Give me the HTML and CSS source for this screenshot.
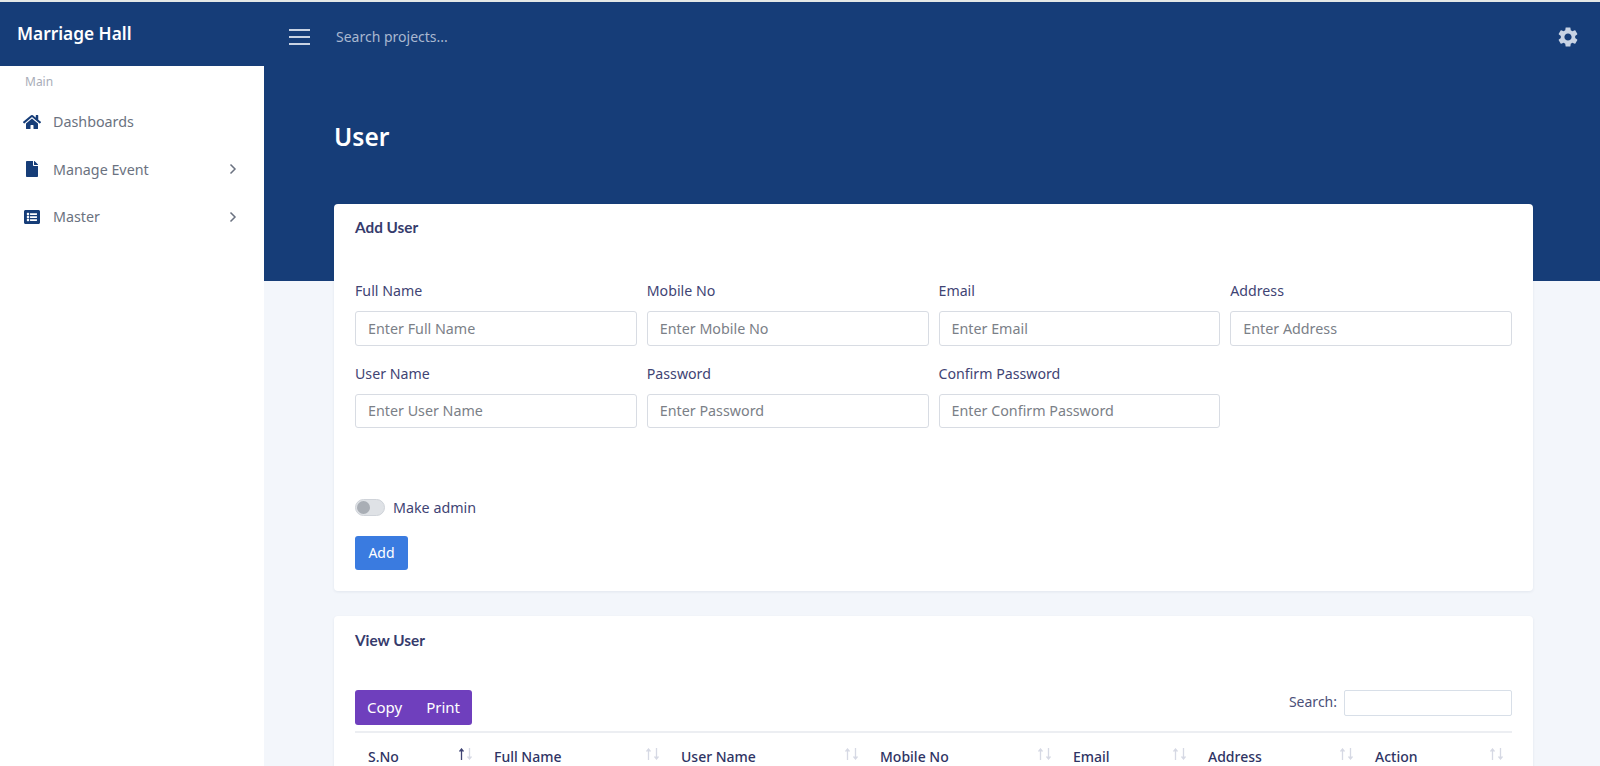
FILE: index.html
```html
<!DOCTYPE html>
<html lang="en">
<head>
<meta charset="utf-8">
<title>User - Marriage Hall</title>
<link rel="stylesheet" href="styles.css">
</head>
<body>
<div class="app">
  <aside class="sidebar">
    <div class="brand">Marriage Hall</div>
    <div class="nav-label">Main</div>
    <nav class="nav">
      <a class="nav-item"><svg class="nav-icon" viewBox="0 0 576 512"><path d="M280.37 148.26L96 300.11V464a16 16 0 0 0 16 16l112.06-.29a16 16 0 0 0 15.92-16V368a16 16 0 0 1 16-16h64a16 16 0 0 1 16 16v95.64a16 16 0 0 0 16 16.05L464 480a16 16 0 0 0 16-16V300L295.67 148.26a12.19 12.19 0 0 0-15.3 0zM571.6 251.47L488 182.56V44.05a12 12 0 0 0-12-12h-56a12 12 0 0 0-12 12v72.61L318.47 43a48 48 0 0 0-61 0L4.34 251.47a12 12 0 0 0-1.6 16.9l25.5 31A12 12 0 0 0 45.15 301l235.22-193.74a12.19 12.19 0 0 1 15.3 0L530.9 301a12 12 0 0 0 16.9-1.6l25.5-31a12 12 0 0 0-1.7-16.93z"/></svg><span class="nav-text">Dashboards</span></a>
      <a class="nav-item"><svg class="nav-icon" viewBox="0 0 384 512"><path d="M224 136V0H24C10.7 0 0 10.7 0 24v464c0 13.3 10.7 24 24 24h336c13.3 0 24-10.7 24-24V160H248c-13.2 0-24-10.8-24-24zm160-14.1v6.1H256V0h6.1c6.4 0 12.5 2.5 17 7l97.9 98c4.5 4.5 7 10.6 7 16.9z"/></svg><span class="nav-text">Manage Event</span><svg class="chev" viewBox="0 0 8 12"><path d="M1.5 1.5 6 6l-4.500 4.500"/></svg></a>
      <a class="nav-item"><svg class="nav-icon" viewBox="0 0 512 512"><path d="M464 480H48c-26.51 0-48-21.49-48-48V80c0-26.51 21.49-48 48-48h416c26.51 0 48 21.49 48 48v352c0 26.51-21.49 48-48 48zM128 120c-22.091 0-40 17.909-40 40s17.909 40 40 40 40-17.909 40-40-17.909-40-40-40zm0 96c-22.091 0-40 17.909-40 40s17.909 40 40 40 40-17.909 40-40-17.909-40-40-40zm0 96c-22.091 0-40 17.909-40 40s17.909 40 40 40 40-17.909 40-40-17.909-40-40-40zm288-136v-32c0-6.627-5.373-12-12-12H204c-6.627 0-12 5.373-12 12v32c0 6.627 5.373 12 12 12h200c6.627 0 12-5.373 12-12zm0 96v-32c0-6.627-5.373-12-12-12H204c-6.627 0-12 5.373-12 12v32c0 6.627 5.373 12 12 12h200c6.627 0 12-5.373 12-12zm0 96v-32c0-6.627-5.373-12-12-12H204c-6.627 0-12 5.373-12 12v32c0 6.627 5.373 12 12 12h200c6.627 0 12-5.373 12-12z"/></svg><span class="nav-text">Master</span><svg class="chev" viewBox="0 0 8 12"><path d="M1.5 1.500 6 6l-4.500 4.500"/></svg></a>
    </nav>
  </aside>
  <main class="main">
    <div class="hero">
      <header class="topbar">
        <button class="burger"><span></span><span></span><span></span></button>
        <div class="top-search">Search projects...</div>
        <svg class="gear" viewBox="0 0 24 24"><path d="M19.14 12.94c.04-.3.06-.61.06-.94 0-.32-.02-.64-.07-.94l2.03-1.58c.18-.14.23-.41.12-.61l-1.92-3.32c-.12-.22-.37-.29-.59-.22l-2.39.96c-.5-.38-1.03-.7-1.62-.94l-.36-2.54c-.04-.24-.24-.41-.48-.41h-3.84c-.24 0-.43.17-.47.41l-.36 2.54c-.59.24-1.13.57-1.62.94l-2.39-.96c-.22-.08-.47 0-.59.22L2.74 8.87c-.12.21-.08.47.12.61l2.03 1.58c-.05.3-.09.63-.09.94s.02.64.07.94l-2.03 1.58c-.18.14-.23.41-.12.61l1.92 3.32c.12.22.37.29.59.22l2.39-.96c.5.38 1.03.7 1.62.94l.36 2.54c.05.24.24.41.48.41h3.84c.24 0 .44-.17.47-.41l.36-2.54c.59-.24 1.13-.56 1.62-.94l2.39.96c.22.08.47 0 .59-.22l1.92-3.32c.12-.22.07-.47-.12-.61l-2.01-1.58zM12 15.6c-1.98 0-3.6-1.62-3.6-3.6s1.62-3.6 3.6-3.6 3.6 1.62 3.6 3.6-1.62 3.6-3.6 3.6z"/></svg>
      </header>
      <h1 class="page-title">User</h1>
    </div>
    <div class="content">
      <section class="card card-form">
        <h2 class="card-title">Add User</h2>
        <form class="form-grid">
          <div class="field"><label>Full Name</label><input placeholder="Enter Full Name"></div>
          <div class="field"><label>Mobile No</label><input placeholder="Enter Mobile No"></div>
          <div class="field"><label>Email</label><input placeholder="Enter Email"></div>
          <div class="field"><label>Address</label><input placeholder="Enter Address"></div>
          <div class="field"><label>User Name</label><input placeholder="Enter User Name"></div>
          <div class="field"><label>Password</label><input placeholder="Enter Password"></div>
          <div class="field"><label>Confirm Password</label><input placeholder="Enter Confirm Password"></div>
        </form>
        <div class="switch-row"><span class="switch"><span class="knob"></span></span><span class="switch-label">Make admin</span></div>
        <button class="btn-add">Add</button>
      </section>
      <section class="card card-table">
        <h2 class="card-title">View User</h2>
        <div class="toolbar">
          <div class="btn-group"><button>Copy</button><button>Print</button></div>
          <label class="table-search">Search:<input></label>
        </div>
        <table class="table">
          <colgroup><col class="c1"><col class="c2"><col class="c3"><col class="c4"><col class="c5"><col class="c6"><col class="c7"></colgroup>
          <thead>
            <tr>
              <th>S.No<svg class="sort" viewBox="0 0 13 12"><path class="arrow-on" d="M2.500 12V1M.5 3.500 2.500 1l2 2.500"/><path class="arrow" d="M10.500 0v11M8.500 8.500l2 2.500 2-2.500"/></svg></th>
              <th>Full Name<svg class="sort" viewBox="0 0 13 12"><path class="arrow" d="M2.500 12V1M.5 3.500 2.500 1l2 2.500"/><path class="arrow" d="M10.500 0v11M8.500 8.500l2 2.500 2-2.500"/></svg></th>
              <th>User Name<svg class="sort" viewBox="0 0 13 12"><path class="arrow" d="M2.500 12V1M.5 3.500 2.500 1l2 2.500"/><path class="arrow" d="M10.500 0v11M8.500 8.500l2 2.500 2-2.500"/></svg></th>
              <th>Mobile No<svg class="sort" viewBox="0 0 13 12"><path class="arrow" d="M2.500 12V1M.5 3.500 2.500 1l2 2.500"/><path class="arrow" d="M10.500 0v11M8.500 8.500l2 2.500 2-2.500"/></svg></th>
              <th>Email<svg class="sort" viewBox="0 0 13 12"><path class="arrow" d="M2.500 12V1M.5 3.500 2.500 1l2 2.500"/><path class="arrow" d="M10.500 0v11M8.500 8.500l2 2.500 2-2.500"/></svg></th>
              <th>Address<svg class="sort" viewBox="0 0 13 12"><path class="arrow" d="M2.500 12V1M.5 3.500 2.500 1l2 2.500"/><path class="arrow" d="M10.500 0v11M8.500 8.500l2 2.500 2-2.500"/></svg></th>
              <th>Action<svg class="sort" viewBox="0 0 13 12"><path class="arrow" d="M2.500 12V1M.5 3.500 2.500 1l2 2.500"/><path class="arrow" d="M10.500 0v11M8.500 8.500l2 2.500 2-2.500"/></svg></th>
            </tr>
          </thead>
        </table>
      </section>
    </div>
  </main>
</div>
</body>
</html>
```
FILE: styles.css
```css
* { box-sizing: border-box; }
html, body { margin: 0; height: 100%; overflow: hidden; }
body { font-family: "Noto Sans", "Open Sans", sans-serif; font-size: 14px; color: #3b3f6b; background: #f3f6fb; }
.app { display: flex; height: 766px; border-top: 2px solid #e4e8e6; }
.sidebar { width: 264px; flex: none; background: #fff; }
.brand { height: 64px; background: #163d78; color: #fff; font-size: 17.300px; font-weight: 600; line-height: 64px; padding-left: 17px; }
.nav-label { color: #a9adb8; font-size: 12px; line-height: 16px; padding: 8px 0 0 25px; }
.nav { display: flex; flex-direction: column; margin-top: 8px; }
.nav-item { display: flex; align-items: center; height: 47.500px; padding: 0 27px 0 23px; color: #6b7280; font-size: 14.300px; }
.nav-icon { width: 18px; height: 16px; fill: #163d78; flex: none; }
.nav-text { margin-left: 12px; flex: 1; }
.chev { width: 8px; height: 12px; fill: none; stroke: #6b7280; stroke-width: 1.500; }
.main { flex: 1; min-width: 0; }
.hero { background: #163d78; height: 279px; display: flex; flex-direction: column; padding-left: 70px; }
.topbar { display: flex; align-items: center; height: 64px; margin-left: -45px; padding: 5px 20px 0 0; }
.burger { width: 21px; height: 16px; padding: 0; border: 0; background: none; display: flex; flex-direction: column; justify-content: space-between; }
.burger span { display: block; height: 2px; background: #c9d3e3; }
.top-search { margin-left: 26px; flex: 1; color: #a9b8d0; font-size: 14px; }
.gear { width: 24px; height: 24px; fill: #c8d3e4; }
.page-title { margin: 47px 0 0; color: #fff; font-size: 24.500px; font-weight: 600; line-height: 48px; }
.content { margin: -77px 67px 0 70px; display: flex; flex-direction: column; gap: 25px; }
.card { background: #fff; border-radius: 4px; padding: 0 21px; box-shadow: 0 1px 3px rgba(30, 50, 90, .08); }
.card-form { height: 387px; }
.card-table { height: 300px; padding-top: 1px; }
.card-title { margin: 0; padding-top: 13px; font-family: "Lato", sans-serif; font-size: 15.300px; font-weight: 700; line-height: 20px; color: #363b6c; }
.form-grid { display: grid; grid-template-columns: repeat(4, 1fr); column-gap: 10px; row-gap: 17px; margin-top: 43px; min-height: 218px; align-content: start; }
.field label { display: block; font-size: 14.200px; line-height: 22px; margin-bottom: 9px; color: #3f4474; }
.field input { display: block; width: 100%; height: 34.500px; border: 1px solid #d8dce3; border-radius: 3px; padding: 0 12px; font: inherit; font-size: 14.300px; background: #fff; }
.field input::placeholder { color: #7b8087; opacity: 1; }
.switch-row { display: flex; align-items: center; height: 18px; }
.switch { width: 30px; height: 17px; border-radius: 9px; background: #dfe2e6; border: 1px solid #cfd3d9; padding: 1px; }
.knob { display: block; width: 13px; height: 13px; border-radius: 50%; background: #a9aeb5; }
.switch-label { margin-left: 8px; font-size: 14.300px; color: #3f4474; }
.btn-add { display: block; margin-top: 20px; width: 53px; height: 34px; border: 0; border-radius: 3px; background: #3a7be0; color: #fff; font: inherit; padding: 0 0 2px; }
.toolbar { display: flex; justify-content: space-between; align-items: flex-start; margin-top: 40px; }
.btn-group { display: flex; height: 35px; background: #6f3fbd; border-radius: 3px; padding: 0 12px; gap: 24px; }
.btn-group button { border: 0; background: none; color: #fff; font: inherit; font-size: 15px; padding: 0 0 2px; }
.table-search { display: flex; align-items: center; gap: 7px; color: #4b5078; height: 26px; padding-bottom: 3px; }
.table-search input { width: 168px; height: 26px; margin-top: 3px; border: 1px solid #d8dfe8; border-radius: 2px; background: #fff; }
.table { width: 100%; table-layout: fixed; border-collapse: collapse; margin-top: 6px; border-top: 2px solid #eceef2; }
.c1 { width: 126px; } .c2 { width: 187px; } .c3 { width: 199px; } .c4 { width: 193px; } .c5 { width: 135px; } .c6 { width: 167px; } .c7 { width: 150px; }
.table th { position: relative; text-align: left; font-weight: 500; padding: 13px 13px; line-height: 22px; color: #2f3464; }
.sort { position: absolute; right: 9px; top: 15px; width: 13px; height: 12px; fill: none; stroke-width: 1.300; }
.arrow { stroke: #d6d9e4; }
.arrow-on { stroke: #3f4474; }
```
